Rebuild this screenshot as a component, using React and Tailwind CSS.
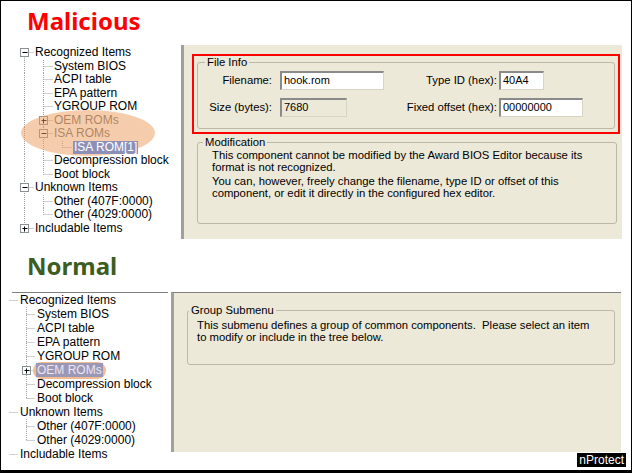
import React from 'react';

// tree row gutter: dotted connector lines and +/- boxes, drawn per row
function Gutter({ cells, box, cw, h }) {
  const cy = Math.floor(h / 2) + 0.5;
  const w = cells.length * cw;
  const lines = [];
  cells.forEach((t, i) => {
    const x0 = i * cw;
    const cx = x0 + Math.floor(cw / 2) + 0.5;
    const dot = { stroke: '#a0a0a0', strokeWidth: 1, strokeDasharray: '1 1' };
    if (t === 'line' || t === 'tee') lines.push(<line key={i + 'v'} x1={cx} y1={0} x2={cx} y2={h} {...dot} />);
    if (t === 'elbow') lines.push(<line key={i + 'v'} x1={cx} y1={0} x2={cx} y2={cy} {...dot} />);
    if (t === 'first') lines.push(<line key={i + 'v'} x1={cx} y1={cy} x2={cx} y2={h} {...dot} />);
    if (t === 'tee' || t === 'elbow' || t === 'first' || t === 'dash')
      lines.push(<line key={i + 'h'} x1={cx} y1={cy} x2={x0 + cw} y2={cy} {...dot} />);
    if (box && i === cells.length - 1) {
      lines.push(
        <g key="box">
          <rect x={cx - 4} y={cy - 4} width={8} height={8} fill="#fff" stroke="#8a9394" />
          <line x1={cx - 2} y1={cy} x2={cx + 3} y2={cy} stroke="#000" />
          {box === 'plus' && <line x1={cx} y1={cy - 2} x2={cx} y2={cy + 3} stroke="#000" />}
        </g>
      );
    }
  });
  return (
    <svg width={w} height={h} className="shrink-0">
      {lines}
    </svg>
  );
}

const topTree = [
  { cells: ['first'], box: 'minus', text: 'Recognized Items' },
  { cells: ['line', 'tee'], text: 'System BIOS' },
  { cells: ['line', 'tee'], text: 'ACPI table' },
  { cells: ['line', 'tee'], text: 'EPA pattern' },
  { cells: ['line', 'tee'], text: 'YGROUP ROM' },
  { cells: ['line', 'tee'], box: 'plus', text: 'OEM ROMs', dim: true },
  { cells: ['line', 'tee'], box: 'minus', text: 'ISA ROMs', dim: true },
  { cells: ['line', 'line', 'elbow'], text: 'ISA ROM[1]', selected: true },
  { cells: ['line', 'tee'], text: 'Decompression block' },
  { cells: ['line', 'elbow'], text: 'Boot block' },
  { cells: ['tee'], box: 'minus', text: 'Unknown Items' },
  { cells: ['line', 'tee'], text: 'Other (407F:0000)' },
  { cells: ['line', 'elbow'], text: 'Other (4029:0000)' },
  { cells: ['elbow'], box: 'plus', text: 'Includable Items' },
];

const bottomTree = [
  { cells: ['dash'], text: 'Recognized Items' },
  { cells: ['blank', 'tee'], text: 'System BIOS' },
  { cells: ['blank', 'tee'], text: 'ACPI table' },
  { cells: ['blank', 'tee'], text: 'EPA pattern' },
  { cells: ['blank', 'tee'], text: 'YGROUP ROM' },
  { cells: ['blank', 'tee'], box: 'plus', text: 'OEM ROMs', pill: true },
  { cells: ['blank', 'tee'], text: 'Decompression block' },
  { cells: ['blank', 'elbow'], text: 'Boot block' },
  { cells: ['dash'], text: 'Unknown Items' },
  { cells: ['blank', 'tee'], text: 'Other (407F:0000)' },
  { cells: ['blank', 'elbow'], text: 'Other (4029:0000)' },
  { cells: ['dash'], text: 'Includable Items' },
];

function Field({ w, value, readOnly }) {
  return (
    <div
      style={{ width: w }}
      className={`h-[19px] border-t-2 border-l-2 border-t-[#8a8a8a] border-l-[#8a8a8a] border-b border-r border-b-[#d8d4c8] border-r-[#d8d4c8] pl-[2px] text-[11px] leading-[15px] ${
        readOnly ? 'bg-[#ece9d8]' : 'bg-white'
      }`}
    >
      {value}
    </div>
  );
}

export default function App() {
  return (
    <div className="relative w-[632px] h-[473px] border border-b-[3px] border-black bg-white overflow-hidden font-['Liberation_Sans',Arial,sans-serif] text-black">
      {/* Malicious */}
      <div className="h-[44px] pl-[26px] pt-[4px] text-[24px] leading-[32px] font-bold text-[#ff0000] font-['Noto_Sans',sans-serif]">
        Malicious
      </div>
      <div className="flex h-[194px]">
        <div className="relative w-[180px] pl-[14px] pt-[1px] text-[12px]">
          {topTree.map((r, i) => (
            <div key={i} className="flex items-center h-[13.5px] leading-[13.5px] whitespace-nowrap">
              <Gutter cells={r.cells} box={r.box} cw={19} h={13.5} />
              {r.selected ? (
                <span className="relative z-10 ml-[1px] bg-[#8d8fb8] text-white px-[1px] leading-[13px]">{r.text}</span>
              ) : (
                <span className={`ml-[1px] ${r.dim ? 'text-[#6f6f6f]' : ''}`}>{r.text}</span>
              )}
            </div>
          ))}
          <div className="absolute left-[20px] top-[65px] w-[134px] h-[46px] rounded-[50%] bg-[#ee9c5a]/50 pointer-events-none" />
        </div>
        <div className="w-[441px] border-l-[3px] border-[#a0a0a0] bg-[#ece9d8] pl-[8px] pt-[9px] text-[11.3px]">
          <div className="w-[428px] border-2 border-[#ff0000] px-[3px] pb-[3px]">
            <fieldset className="border border-[#bcb8a8] rounded-[3px]">
              <legend className="ml-[7px] px-[2px] leading-[13px]">File Info</legend>
              <div className="pt-[2px] pb-[11px]">
                <div className="flex items-center">
                  <div className="w-[74px] text-right">Filename:</div>
                  <div className="ml-[8px]"><Field w={104} value="hook.rom" /></div>
                  <div className="w-[113px] text-right">Type ID (hex):</div>
                  <div className="ml-[2px]"><Field w={45} value="40A4" /></div>
                </div>
                <div className="flex items-center mt-[8px]">
                  <div className="w-[74px] text-right">Size (bytes):</div>
                  <div className="ml-[8px]"><Field w={67} value="7680" readOnly /></div>
                  <div className="w-[150px] text-right">Fixed offset (hex):</div>
                  <div className="ml-[2px]"><Field w={84} value="00000000" /></div>
                </div>
              </div>
            </fieldset>
          </div>
          <fieldset className="mt-[2px] ml-[5px] w-[420px] border border-[#bcb8a8] rounded-[3px]">
            <legend className="ml-[5px] px-[2px] leading-[13px]">Modification</legend>
            <div className="pl-[14px] pt-[1px] pb-[24px] leading-[11.5px] whitespace-nowrap">
              <p>
                This component cannot be modified by the Award BIOS Editor because its
                <br />
                format is not recognized.
              </p>
              <p className="mt-[3px]">
                You can, however, freely change the filename, type ID or offset of this
                <br />
                component, or edit it directly in the configured hex editor.
              </p>
            </div>
          </fieldset>
        </div>
      </div>

      {/* Normal */}
      <div className="h-[53px] pl-[26px] pt-[11px] text-[24px] leading-[32px] font-bold text-[#3d5c1f] font-['Noto_Sans',sans-serif]">
        Normal
      </div>
      <div className="flex h-[160px]">
        <div className="w-[170px] text-[12px]">
          <div className="ml-[11px] w-[156px] h-px bg-[#808080]" />
          {bottomTree.map((r, i) => (
            <div key={i} className="flex items-center h-[14px] leading-[14px] whitespace-nowrap">
              <Gutter cells={r.cells} box={r.box} cw={17} h={14} />
              {r.pill ? (
                <span className="ml-[-2px] -my-[2px] rounded-full bg-[#f2bb90] px-[3px] py-[2px] leading-[13px]">
                  <span className="bg-[#9b98b6] text-[#ece4f0] px-[1px]">{r.text}</span>
                </span>
              ) : (
                <span className="ml-[2px]">{r.text}</span>
              )}
            </div>
          ))}
        </div>
        <div className="w-[450px] border-l-[3px] border-t border-l-[#a0a0a0] border-t-[#808080] bg-[#ece9d8] pt-[11px] pl-[13px] text-[11.3px]">
          <fieldset className="w-[428px] border border-[#bcb8a8] rounded-[3px]">
            <legend className="ml-[1px] px-[2px] leading-[13px]">Group Submenu</legend>
            <div className="pl-[9px] pt-[3px] pb-[21px] leading-[11.5px] whitespace-nowrap">
              This submenu defines a group of common components.&nbsp; Please select an item
              <br />
              to modify or include in the tree below.
            </div>
          </fieldset>
        </div>
      </div>

      <div className="absolute right-[5px] bottom-[3px] bg-black text-white text-[12px] leading-[14px] px-[2px]">
        nProtect
      </div>
    </div>
  );
}
